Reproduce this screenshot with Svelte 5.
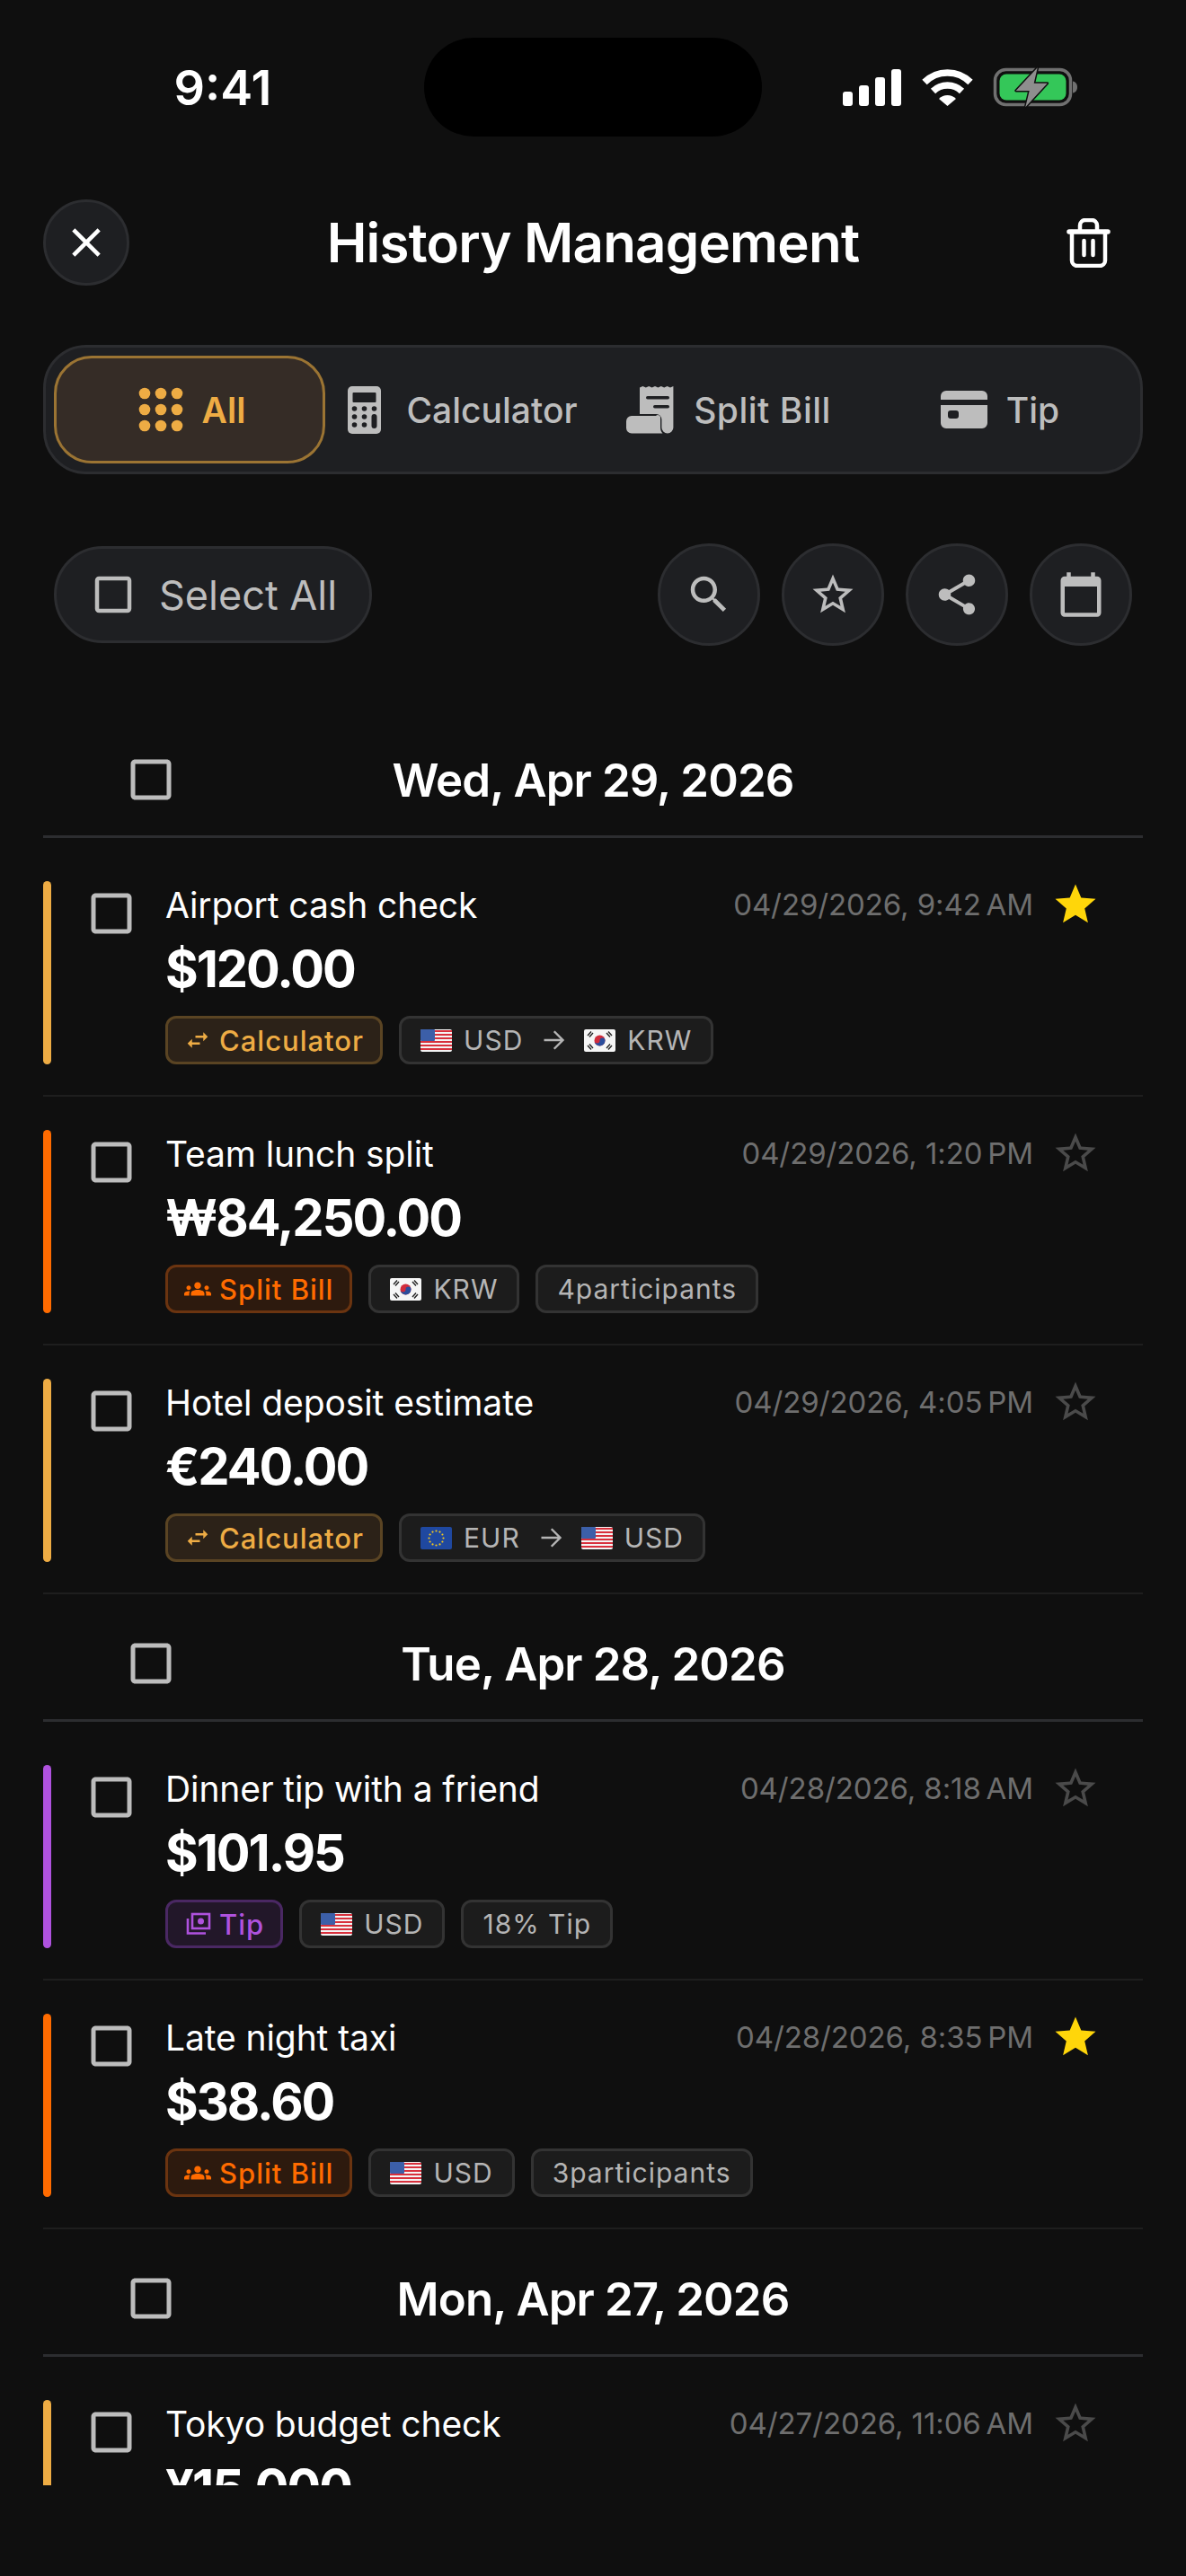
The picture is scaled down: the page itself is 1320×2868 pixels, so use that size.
<script>
	const P = {
		check: 'M19 5v14H5V5h14m0-2H5c-1.1 0-2 .9-2 2v14c0 1.1.9 2 2 2h14c1.1 0 2-.9 2-2V5c0-1.1-.9-2-2-2z',
		star: 'M12 17.27L18.18 21l-1.64-7.03L22 9.24l-7.19-.61L12 2 9.19 8.63 2 9.24l5.46 4.73L5.82 21z',
		starLine: 'M22 9.24l-7.19-.62L12 2 9.19 8.63 2 9.24l5.46 4.73L5.82 21 12 17.27 18.18 21l-1.63-7.03L22 9.24zM12 15.4l-3.76 2.27 1-4.28-3.32-2.88 4.38-.38L12 6.1l1.71 4.04 4.38.38-3.32 2.88 1 4.28L12 15.4z',
		close: 'M19 6.41L17.59 5 12 10.59 6.41 5 5 6.41 10.59 12 5 17.59 6.41 19 12 13.41 17.59 19 19 17.59 13.41 12z',
		search: 'M15.5 14h-.79l-.28-.27C15.41 12.59 16 11.11 16 9.5 16 5.91 13.09 3 9.5 3S3 5.91 3 9.5 5.91 16 9.5 16c1.61 0 3.09-.59 4.23-1.57l.27.28v.79l5 4.99L20.49 19l-4.99-5zm-6 0C7.01 14 5 11.99 5 9.5S7.01 5 9.5 5 14 7.01 14 9.5 11.99 14 9.5 14z',
		share: 'M18 16.08c-.76 0-1.44.3-1.96.77L8.91 12.7c.05-.23.09-.46.09-.7s-.04-.47-.09-.7l7.05-4.11c.54.5 1.25.81 2.04.81 1.66 0 3-1.34 3-3s-1.34-3-3-3-3 1.34-3 3c0 .24.04.47.09.7L8.04 9.81C7.5 9.31 6.79 9 6 9c-1.66 0-3 1.34-3 3s1.34 3 3 3c.79 0 1.5-.31 2.04-.81l7.12 4.16c-.05.21-.08.43-.08.65 0 1.61 1.31 2.92 2.92 2.92s2.92-1.31 2.92-2.92-1.31-2.92-2.92-2.92z',
		calendar: 'M20 3h-1V1h-2v2H7V1H5v2H4c-1.1 0-2 .9-2 2v16c0 1.1.9 2 2 2h16c1.1 0 2-.9 2-2V5c0-1.1-.9-2-2-2zm0 18H4V8h16v13z',
		swap: 'M6.99 11L3 15l3.99 4v-3H14v-2H6.99v-3zM21 9l-3.99-4v3H10v2h7.01v3L21 9z',
		groups: 'M12 12.75c1.63 0 3.07.39 4.24.9 1.08.48 1.76 1.56 1.76 2.73V18H6v-1.61c0-1.18.68-2.26 1.76-2.73 1.17-.52 2.61-.91 4.24-.91zM4 13c1.1 0 2-.9 2-2s-.9-2-2-2-2 .9-2 2 .9 2 2 2zm1.13 1.1C4.76 14.04 4.39 14 4 14c-.99 0-1.93.21-2.78.58C.48 14.9 0 15.62 0 16.43V18h4.5v-1.61c0-.83.23-1.61.63-2.29zM20 13c1.1 0 2-.9 2-2s-.9-2-2-2-2 .9-2 2 .9 2 2 2zm4 3.43c0-.81-.48-1.53-1.22-1.85-.85-.37-1.79-.58-2.78-.58-.39 0-.76.04-1.13.1.4.68.63 1.46.63 2.29V18H24v-1.57zM12 6c1.66 0 3 1.34 3 3s-1.34 3-3 3-3-1.34-3-3 1.34-3 3-3z'
	};

	const kinds = {
		calc: { label: 'Calculator', cls: 'calc' },
		split: { label: 'Split Bill', cls: 'split' },
		tip: { label: 'Tip', cls: 'tip' }
	};

	const sections = [
		{
			date: 'Wed, Apr 29, 2026',
			items: [
				{ title: 'Airport cash check', amount: '$120.00', time: '04/29/2026, 9:42\u202fAM', fav: true, kind: 'calc', from: 'us', fromCode: 'USD', to: 'kr', toCode: 'KRW' },
				{ title: 'Team lunch split', amount: '₩84,250.00', time: '04/29/2026, 1:20\u202fPM', kind: 'split', from: 'kr', fromCode: 'KRW', extra: '4participants' },
				{ title: 'Hotel deposit estimate', amount: '€240.00', time: '04/29/2026, 4:05\u202fPM', kind: 'calc', from: 'eu', fromCode: 'EUR', to: 'us', toCode: 'USD' }
			]
		},
		{
			date: 'Tue, Apr 28, 2026',
			items: [
				{ title: 'Dinner tip with a friend', amount: '$101.95', time: '04/28/2026, 8:18\u202fAM', kind: 'tip', from: 'us', fromCode: 'USD', extra: '18% Tip' },
				{ title: 'Late night taxi', amount: '$38.60', time: '04/28/2026, 8:35\u202fPM', fav: true, kind: 'split', from: 'us', fromCode: 'USD', extra: '3participants' }
			]
		},
		{
			date: 'Mon, Apr 27, 2026',
			items: [
				{ title: 'Tokyo budget check', amount: '¥15,000', time: '04/27/2026, 11:06\u202fAM', kind: 'calc', from: 'jp', fromCode: 'JPY', to: 'us', toCode: 'USD' }
			]
		}
	];
</script>

{#snippet icon(d, size, cls = '')}
	<svg class={cls} width={size} height={size} viewBox="0 0 24 24" fill="currentColor"><path {d} /></svg>
{/snippet}

{#snippet flag(code)}
	<svg class="flag" width="35" height="25" viewBox="0 0 35 25">
		{#if code === 'us'}
			<rect width="35" height="25" rx="2" fill="#f4f4f4" />
			{#each [0, 4, 8, 12, 16, 20] as y}
				<rect y={y + 1} width="35" height="2" fill="#d8303c" />
			{/each}
			<rect width="16" height="13" rx="1" fill="#3c5fa8" />
		{:else if code === 'kr'}
			<rect width="35" height="25" rx="2" fill="#f6f6f6" />
			<circle cx="17.5" cy="12.5" r="6" fill="#d12c3c" />
			<path d="M11.5 12.5a6 6 0 0 0 12 0 3 3 0 0 0-6 0 3 3 0 0 1-6 0z" fill="#2a4d9c" />
			<path d="M4 7l4-4.5M6 8.5l4-4.5M25 4l4 4.5M27 2.5l4 4.5M4 18l4 4.5M6 16.5l4 4.5M25 21l4-4.5M27 22.500l4-4.500" stroke="#222" stroke-width="1.400" />
		{:else if code === 'eu'}
			<rect width="35" height="25" rx="2" fill="#1f48a0" />
			{#each [0, 30, 60, 90, 120, 150, 180, 210, 240, 270, 300, 330] as a}
				<circle cx={17.5 + 8 * Math.cos((a * Math.PI) / 180)} cy={12.5 + 8 * Math.sin((a * Math.PI) / 180)} r="1.100" fill="#f2c81e" />
			{/each}
		{:else}
			<rect width="35" height="25" rx="2" fill="#f6f6f6" />
			<circle cx="17.5" cy="12.5" r="7" fill="#d12c3c" />
		{/if}
	</svg>
{/snippet}

<div class="screen">
	<div class="status">
		<span class="clock">9:41</span>
		<span class="island"></span>
		<div class="status-icons">
			<svg width="65" height="41" viewBox="0 0 65 41" fill="#fff">
				<rect x="0" y="25" width="11" height="16" rx="3" />
				<rect x="18" y="18" width="11" height="23" rx="3" />
				<rect x="36" y="9" width="11" height="32" rx="3" />
				<rect x="54" y="0" width="11" height="41" rx="3" />
			</svg>
			<svg width="57" height="41" viewBox="0 0 57 41" fill="none" stroke="#fff" stroke-width="7.500">
				<path d="M3 14.500A36 36 0 0 1 54 14.500" />
				<path d="M12.500 24.500A23 23 0 0 1 44.500 24.500" />
				<path d="M19 33A13.500 13.500 0 0 1 38 33L28.500 41Z" fill="#fff" stroke="none" />
			</svg>
			<svg class="battery" width="93" height="42" viewBox="0 0 93 42">
				<rect x="1.500" y="1.500" width="84" height="39" rx="12" fill="none" stroke="#707070" stroke-width="3.500" />
				<rect x="6.500" y="6.500" width="74" height="29" rx="7.500" fill="#34c759" />
				<path d="M88 14.500c3 .5 5 3 5 6.500s-2 6-5 6.500z" fill="#707070" />
				<path d="M48.700-.7L24.700 25H39.700L35.300 43.300 59.700 16.700H44.700Z" fill="#8e8e8e" stroke="#0f0f0f" stroke-width="3" stroke-linejoin="round" paint-order="stroke" />
			</svg>
		</div>
	</div>

	<header class="top">
		<button class="close">{@render icon(P.close, 54)}</button>
		<h1>History Management</h1>
		<button class="trash">
			<svg width="49" height="55" viewBox="0 0 49 55" fill="none" stroke="currentColor" stroke-width="4.500" stroke-linecap="round">
				<path d="M15 13V8a6 6 0 0 1 6-6h7a6 6 0 0 1 6 6V13" />
				<path stroke-width="5.500" d="M3 15H46" />
				<path d="M6 15V47a6 6 0 0 0 6 6H37a6 6 0 0 0 6-6V15" />
				<path d="M19.500 25V41M29.500 25V41" />
			</svg>
		</button>
	</header>

	<nav class="tabs">
		<div class="tab active">
			<svg width="72" height="72" viewBox="0 0 24 24" fill="currentColor">
				{#each [6, 12, 18] as cy}
					{#each [6, 12, 18] as cx}
						<circle {cx} {cy} r="2.100" />
					{/each}
				{/each}
			</svg>
			<span>All</span>
		</div>
		<div class="tab calc-tab">
			<svg width="37" height="53" viewBox="0 0 37 53">
				<rect width="37" height="53" rx="5" fill="currentColor" />
				<rect x="5.500" y="7" width="26" height="11" rx="1" fill="#1e1f22" />
				{#each [25, 34, 43] as cy, row}
					<circle cx="7.500" {cy} r="2.800" fill="#1e1f22" />
					<circle cx="18.500" {cy} r="2.800" fill="#1e1f22" />
					{#if row === 0}<circle cx="29.500" {cy} r="2.800" fill="#1e1f22" />{/if}
				{/each}
				<rect x="26.500" y="31" width="6" height="16" rx="3" fill="#1e1f22" />
			</svg>
			<span>Calculator</span>
		</div>
		<div class="tab split-tab">
			<svg width="56" height="53" viewBox="0 0 56 53" fill="currentColor">
				<path d="M15 1.500l3.400-1.500 3.400 1.500 3.400-1.500 3.400 1.500 3.400-1.500 3.400 1.500 3.400-1.500 3.400 1.500 3.400-1.500 3.400 1.500 3.400-1.500 V46a6.500 6.500 0 0 1-13 0V37a6 6 0 0 0-6-6H15Z" />
				<path d="M0 39a6 6 0 0 1 6-6H33a3 3 0 0 1 5 3V46c0 3 1 5 2.500 6.500H6a6 6 0 0 1-6-6Z" />
				<rect x="22" y="11" width="26" height="3.500" rx="1.750" fill="#1e1f22" />
				<rect x="30" y="21" width="18" height="3.500" rx="1.750" fill="#1e1f22" />
			</svg>
			<span>Split Bill</span>
		</div>
		<div class="tab tip-tab">
			<svg width="52" height="42" viewBox="0 0 52 42" fill="currentColor">
				<path d="M0 10V6a6 6 0 0 1 6-6H46a6 6 0 0 1 6 6V10Z" />
				<path fill-rule="evenodd" d="M0 16H52V36a6 6 0 0 1-6 6H6a6 6 0 0 1-6-6ZM11 22a3 3 0 0 0-3 3v3a3 3 0 0 0 3 3h6a3 3 0 0 0 3-3v-3a3 3 0 0 0-3-3Z" />
			</svg>
			<span>Tip</span>
		</div>
	</nav>

	<div class="tools">
		<div class="select-all">
			{@render icon(P.check, 54)}
			<span>Select All</span>
		</div>
		<div class="round-group">
			<button class="round">{@render icon(P.search, 54)}</button>
			<button class="round">{@render icon(P.starLine, 54)}</button>
			<button class="round">{@render icon(P.share, 54)}</button>
			<button class="round">{@render icon(P.calendar, 54)}</button>
		</div>
	</div>

	<main class="list">
		{#each sections as section}
			<section>
				<div class="day-head">
					<span class="day-check">{@render icon(P.check, 60)}</span>
					<h2>{section.date}</h2>
				</div>
				{#each section.items as item}
					<article class="row {kinds[item.kind].cls}">
						<span class="accent"></span>
						<span class="row-check">{@render icon(P.check, 60)}</span>
						<div class="row-body">
							<div class="row-top">
								<span class="row-title">{item.title}</span>
								<span class="row-time">{item.time}</span>
								{#if item.fav}
									{@render icon(P.star, 54, 'fav')}
								{:else}
									{@render icon(P.starLine, 54, 'nofav')}
								{/if}
							</div>
							<div class="amount">{item.amount}</div>
							<div class="badges">
								<span class="badge type">
									{#if item.kind === 'calc'}
										{@render icon(P.swap, 30)}
									{:else if item.kind === 'split'}
										{@render icon(P.groups, 30)}
									{:else}
										<svg width="30" height="30" viewBox="0 0 30 30" fill="none" stroke="currentColor" stroke-width="2.600">
											<rect x="9" y="4" width="19" height="16" />
											<circle cx="18.500" cy="12" r="3.500" fill="currentColor" stroke="none" />
											<path d="M4 9V25.500H24" />
										</svg>
									{/if}
									{kinds[item.kind].label}
								</span>
								<span class="badge">
									{@render flag(item.from)}
									{item.fromCode}
									{#if item.to}
										<svg class="arrow" width="36" height="36" viewBox="0 0 24 24" fill="none" stroke="currentColor" stroke-width="1.600"><path d="M5 12H19M12.500 5.500L19 12L12.500 18.500" /></svg>
										{@render flag(item.to)}
										{item.toCode}
									{/if}
								</span>
								{#if item.extra}
									<span class="badge">{item.extra}</span>
								{/if}
							</div>
						</div>
					</article>
				{/each}
			</section>
		{/each}
	</main>
</div>

<style>
	:global(body) {
		background: #0f0f0f;
	}
	.screen {
		height: 2868px;
		overflow: hidden;
		background: #0f0f0f;
		color: #fff;
		font-family: Inter, 'Liberation Sans', sans-serif;
	}
	button {
		padding: 0;
		font: inherit;
		color: inherit;
		background: none;
		border: 0;
		display: flex;
		align-items: center;
		justify-content: center;
	}
	svg {
		display: block;
		flex: none;
	}

	/* status bar */
	.status {
		height: 222px;
		padding-top: 42px;
		box-sizing: border-box;
		display: grid;
		grid-template-columns: 472px 376px 472px;
		align-items: start;
	}
	.clock {
		height: 110px;
		display: flex;
		align-items: center;
		justify-content: center;
		padding-left: 24px;
		font-size: 54px;
		font-weight: 600;
	}
	.island {
		height: 110px;
		border-radius: 55px;
		background: #000;
	}
	.status-icons {
		height: 110px;
		display: flex;
		align-items: center;
		gap: 23px;
		padding-left: 90px;
	}
	.battery {
		overflow: visible;
	}

	/* header */
	.top {
		height: 96px;
		padding: 0 48px;
		display: flex;
		align-items: center;
		justify-content: space-between;
	}
	.top h1 {
		margin: 0;
		font-size: 60px;
		font-weight: 600;
		letter-spacing: -0.8px;
	}
	.close {
		width: 96px;
		height: 96px;
		box-sizing: border-box;
		border-radius: 50%;
		background: #1e1f22;
		border: 3px solid #2c2d30;
	}
	.trash {
		width: 72px;
		height: 72px;
		margin-right: 24px;
	}

	/* tabs */
	.tabs {
		margin: 66px 48px 0;
		height: 144px;
		box-sizing: border-box;
		padding: 9px;
		display: grid;
		grid-template-columns: 302px 304px 290px 304px;
		background: #1e1f22;
		border: 3px solid #2c2d30;
		border-radius: 48px;
	}
	.tab {
		display: flex;
		align-items: center;
		justify-content: center;
		font-size: 39px;
		font-weight: 500;
		color: #bdbdbd;
		border: 3px solid transparent;
		border-radius: 42px;
	}
	.tab.active {
		gap: 10px;
		padding-right: 6px;
		font-weight: 600;
		color: #eeac44;
		background: #352c26;
		border-color: #9b7433;
	}
	.calc-tab {
		gap: 28px;
		padding-left: 2px;
	}
	.split-tab {
		gap: 19px;
		letter-spacing: 0.5px;
	}
	.tip-tab {
		gap: 21px;
		padding-left: 10px;
	}

	/* tools */
	.tools {
		margin-top: 77px;
		padding: 0 60px;
		height: 114px;
		display: flex;
		align-items: center;
		justify-content: space-between;
	}
	.select-all {
		height: 108px;
		box-sizing: border-box;
		padding: 0 36px;
		display: flex;
		align-items: center;
		gap: 24px;
		background: #1e1f22;
		border: 3px solid #2c2d30;
		border-radius: 54px;
		color: #bdbdbd;
		font-size: 45px;
		font-weight: 400;
	}
	.round-group {
		display: flex;
		gap: 24px;
	}
	.round {
		width: 114px;
		height: 114px;
		box-sizing: border-box;
		border-radius: 50%;
		background: #1e1f22;
		border: 3px solid #2c2d30;
		color: #bdbdbd;
	}

	/* list */
	.list {
		margin: 72px 48px 0;
		height: 1976px;
		overflow: hidden;
	}
	.day-head {
		padding-top: 15px;
		height: 124px;
		display: grid;
		grid-template-columns: 1fr auto 1fr;
		align-items: center;
		border-bottom: 3px solid #2c2d30;
		margin-bottom: 48px;
		color: #bdbdbd;
	}
	.day-check {
		padding-left: 90px;
	}
	.day-head h2 {
		margin: 0;
		font-size: 51px;
		font-weight: 600;
		letter-spacing: -0.9px;
		color: #fff;
	}
	.row {
		display: flex;
		padding-bottom: 34px;
		border-bottom: 2px solid #1e1e1e;
		margin-bottom: 37px;
	}
	section > .row:last-child {
		margin-bottom: 0;
	}
	.accent {
		width: 9px;
		height: 204px;
		border-radius: 5px;
		background: var(--accent);
		flex: none;
	}
	.calc {
		--accent: #eeac44;
		--tint: #2c2218;
		--line: #5a4423;
	}
	.split {
		--accent: #ff6b00;
		--tint: #2d1a0e;
		--line: #6b3410;
	}
	.tip {
		--accent: #af52de;
		--tint: #221729;
		--line: #4a2863;
	}
	.row-check {
		width: 60px;
		height: 60px;
		margin: 6px 30px 0 37px;
		color: #bdbdbd;
		flex: none;
	}
	.row-body {
		flex: 1;
		min-width: 0;
	}
	.row-top {
		height: 52px;
		display: flex;
		align-items: center;
		padding-right: 48px;
	}
	.row-title {
		flex: 1;
		font-size: 39px;
		font-weight: 400;
		letter-spacing: -0.1px;
	}
	.row-time {
		margin-right: 20px;
		font-size: 33px;
		letter-spacing: -0.1px;
		color: #6e6e6e;
	}
	.row-top :global(.fav) {
		color: #ffd60a;
	}
	.row-top :global(.nofav) {
		color: #4a4a4a;
	}
	.amount {
		margin-top: 10px;
		font-size: 56px;
		line-height: 72px;
		font-weight: 700;
		letter-spacing: -2px;
	}
	.badges {
		margin-top: 16px;
		display: flex;
		gap: 18px;
	}
	.badge {
		height: 54px;
		box-sizing: border-box;
		padding: 0 21px;
		display: flex;
		align-items: center;
		gap: 13px;
		background: #1c1c1c;
		border: 3px solid #333;
		border-radius: 12px;
		color: #b5b5b5;
		font-size: 30px;
		letter-spacing: 1px;
		white-space: nowrap;
	}
	.badge.type {
		gap: 9px;
		padding: 0 18px;
		color: var(--accent);
		background: var(--tint);
		border-color: var(--line);
		font-size: 31px;
		font-weight: 500;
	}
	.arrow {
		margin: 0 3px;
	}
</style>
